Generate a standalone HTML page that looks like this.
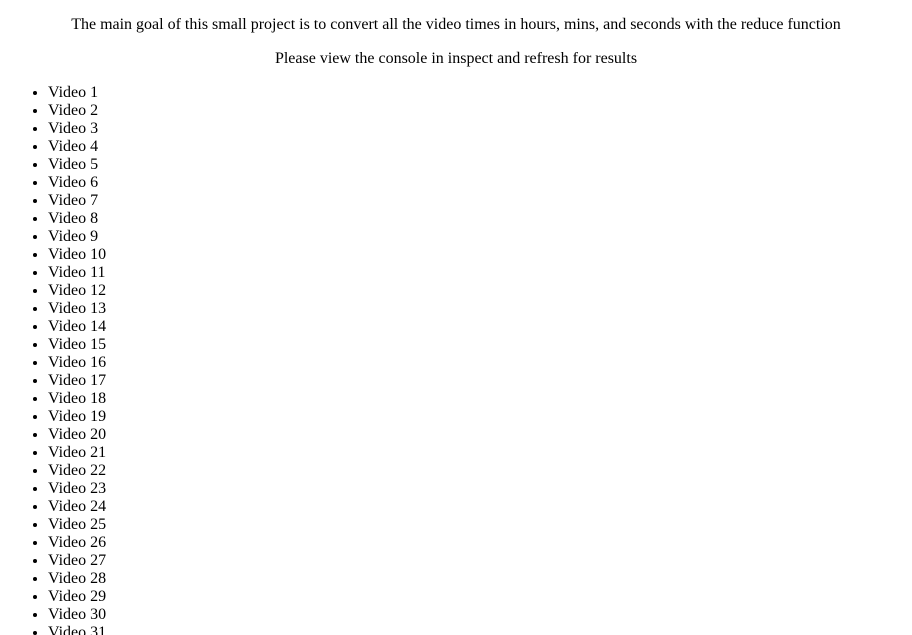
<!DOCTYPE html>
<html><head><style>
html,body{margin:0;padding:0;background:#fff;}
html{height:635px;overflow:hidden;}
body{font-family:"Liberation Serif",serif;font-size:16px;color:#000;line-height:18px;padding:16px 8px 0 8px;height:619px;overflow:hidden;}
p{margin:0 0 16px 0;text-align:center;}
ul{margin:0;padding-left:40px;}
</style></head><body>
<p>The main goal of this small project is to convert all the video times in hours, mins, and seconds with the reduce function</p>
<p>Please view the console in inspect and refresh for results</p>
<ul>
<li>Video 1</li><li>Video 2</li><li>Video 3</li><li>Video 4</li><li>Video 5</li><li>Video 6</li><li>Video 7</li><li>Video 8</li><li>Video 9</li><li>Video 10</li><li>Video 11</li><li>Video 12</li><li>Video 13</li><li>Video 14</li><li>Video 15</li><li>Video 16</li><li>Video 17</li><li>Video 18</li><li>Video 19</li><li>Video 20</li><li>Video 21</li><li>Video 22</li><li>Video 23</li><li>Video 24</li><li>Video 25</li><li>Video 26</li><li>Video 27</li><li>Video 28</li><li>Video 29</li><li>Video 30</li><li>Video 31</li>
</ul>
</body></html>
